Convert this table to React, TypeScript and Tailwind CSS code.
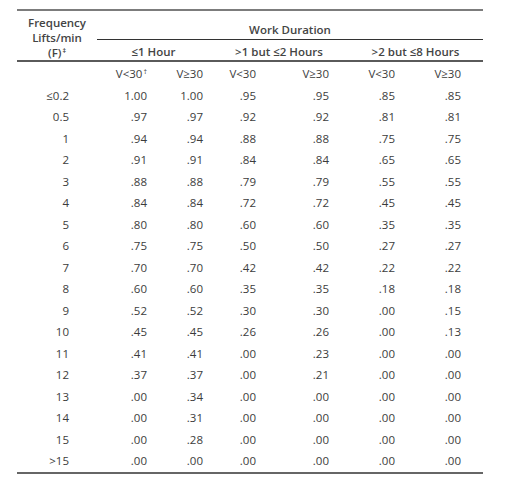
import React from "react";

const rows: [string, string[]][] = [
  ["≤0.2", ["1.00", "1.00", ".95", ".95", ".85", ".85"]],
  ["0.5", [".97", ".97", ".92", ".92", ".81", ".81"]],
  ["1", [".94", ".94", ".88", ".88", ".75", ".75"]],
  ["2", [".91", ".91", ".84", ".84", ".65", ".65"]],
  ["3", [".88", ".88", ".79", ".79", ".55", ".55"]],
  ["4", [".84", ".84", ".72", ".72", ".45", ".45"]],
  ["5", [".80", ".80", ".60", ".60", ".35", ".35"]],
  ["6", [".75", ".75", ".50", ".50", ".27", ".27"]],
  ["7", [".70", ".70", ".42", ".42", ".22", ".22"]],
  ["8", [".60", ".60", ".35", ".35", ".18", ".18"]],
  ["9", [".52", ".52", ".30", ".30", ".00", ".15"]],
  ["10", [".45", ".45", ".26", ".26", ".00", ".13"]],
  ["11", [".41", ".41", ".00", ".23", ".00", ".00"]],
  ["12", [".37", ".37", ".00", ".21", ".00", ".00"]],
  ["13", [".00", ".34", ".00", ".00", ".00", ".00"]],
  ["14", [".00", ".31", ".00", ".00", ".00", ".00"]],
  ["15", [".00", ".28", ".00", ".00", ".00", ".00"]],
  [">15", [".00", ".00", ".00", ".00", ".00", ".00"]],
];

const grid =
  "grid grid-cols-[52px_78px_56px_53px_73px_66px_66px_22px] h-[21.5px] items-center leading-[15px]";

export default function App() {
  return (
    <div className="w-[516px] h-[492px] bg-white pt-[9px] pl-[17px] font-['Open_Sans',sans-serif] text-[11.5px] text-[#3c3c3c]">
      <div className="w-[466px]">
        {/* Header */}
        <div className="border-t-2 border-[#7c7c7c] border-b-2 border-b-[#5a5a5a] grid grid-cols-[80px_386px] font-semibold text-[#444] leading-[15px]">
          <div className="flex flex-col items-center pt-[3.5px]">
            <span>Frequency</span>
            <span>Lifts/min</span>
            <span>
              (F)<sup className="text-[7px] relative -top-[4px] ml-[1px]">‡</sup>
            </span>
          </div>
          <div className="flex flex-col">
            <div className="h-[29px] flex items-end justify-center pb-[2px] border-b border-[#333]">
              Work Duration
            </div>
            <div className="h-[20px] grid grid-cols-[113px_138px_135px] pt-[4px]">
              <div className="text-center">≤1 Hour</div>
              <div className="text-center">&gt;1 but ≤2 Hours</div>
              <div className="text-center">&gt;2 but ≤8 Hours</div>
            </div>
          </div>
        </div>
        {/* Body */}
        <div className="border-b-2 border-[#666] pt-[1px]">
          <div className={grid}>
            <div />
            <div className="text-right">
              V&lt;30<sup className="text-[7px] relative -top-[4px] ml-[1px]">†</sup>
            </div>
            <div className="text-right">V≥30</div>
            <div className="text-right">V&lt;30</div>
            <div className="text-right">V≥30</div>
            <div className="text-right">V&lt;30</div>
            <div className="text-right">V≥30</div>
            <div />
          </div>
          {rows.map(([f, vals]) => (
            <div key={f} className={grid}>
              <div className="text-right">{f}</div>
              {vals.map((v, i) => (
                <div key={i} className="text-right">
                  {v}
                </div>
              ))}
              <div />
            </div>
          ))}
        </div>
      </div>
    </div>
  );
}
